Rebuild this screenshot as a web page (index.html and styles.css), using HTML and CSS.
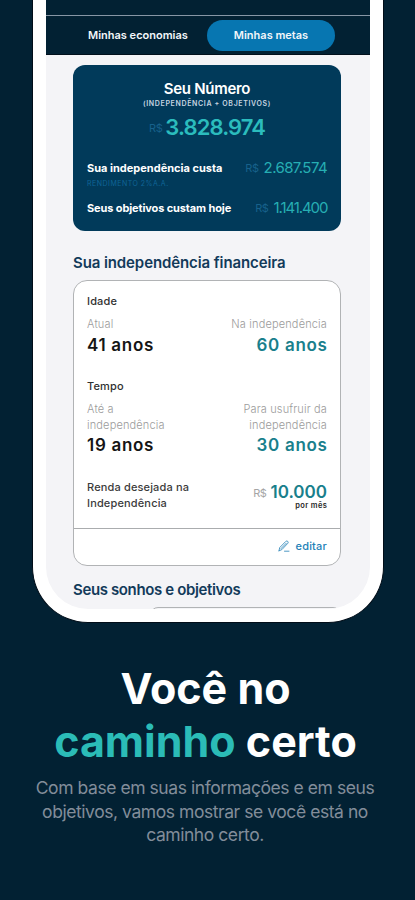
FILE: index.html
```html
<!DOCTYPE html>
<html lang="pt-BR">
<head>
<meta charset="utf-8">
<title>Minhas metas</title>
<link rel="stylesheet" href="styles.css">
</head>
<body>
<main class="phone">
  <div class="screen">
    <nav class="tabs">
      <span class="tab">Minhas economias</span>
      <span class="tab tab-active">Minhas metas</span>
    </nav>
    <section class="total">
      <h2 class="total-title">Seu Número</h2>
      <p class="total-sub">(INDEPENDÊNCIA + OBJETIVOS)</p>
      <p class="total-value"><span class="cur">R$</span><b>3.828.974</b></p>
      <div class="cost">
        <span class="cost-label">Sua independência custa</span>
        <span class="cost-value"><span class="cur">R$</span><b>2.687.574</b></span>
      </div>
      <p class="rate">RENDIMENTO 2%A.A.</p>
      <div class="cost">
        <span class="cost-label goals">Seus objetivos custam hoje</span>
        <span class="cost-value goals-value"><span class="cur">R$</span><b>1.141.400</b></span>
      </div>
    </section>
    <h2 class="heading">Sua independência financeira</h2>
    <section class="plan">
      <div class="plan-body">
        <h3 class="group">Idade</h3>
        <div class="pair idade">
          <div><p class="hint">Atual</p><p class="years">41 anos</p></div>
          <div class="right"><p class="hint">Na independência</p><p class="years teal">60 anos</p></div>
        </div>
        <h3 class="group">Tempo</h3>
        <div class="pair tempo">
          <div><p class="hint">Até a<br>independência</p><p class="years">19 anos</p></div>
          <div class="right"><p class="hint">Para usufruir da<br>independência</p><p class="years teal">30 anos</p></div>
        </div>
        <div class="pair">
          <p class="income-label">Renda desejada na<br>Independência</p>
          <div class="right income">
            <p class="income-value"><span class="cur">R$</span><b>10.000</b></p>
            <p class="per-month">por mês</p>
          </div>
        </div>
      </div>
      <div class="plan-foot">
        <svg class="pencil" viewBox="0 0 12 12" width="12" height="12"><path d="M1 10.8 1.7 7.6 7.8 1.4Q8.7.6 9.7 1.3 10.7 2.3 9.8 3.3L3.9 9.6 1 10.8M3 8.6 8.3 3.2M6.5 11.2H11"/></svg>
        <span class="edit">editar</span>
      </div>
    </section>
    <h2 class="heading dreams">Seus sonhos e objetivos</h2>
    <div class="next-card"></div>
  </div>
</main>
<section class="pitch">
  <h1>Você no<br><em>caminho</em> certo</h1>
  <p>Com base em suas informações e em seus<br>objetivos, vamos mostrar se você está no<br>caminho certo.</p>
</section>
</body>
</html>
```
FILE: styles.css
```css
* { box-sizing: border-box; margin: 0; padding: 0; }
html { background: #022133; }
body { width: 415px; height: 900px; overflow: hidden; background: #022133; font-family: Inter, "Liberation Sans", sans-serif; }
p, h1, h2, h3, span { white-space: nowrap; }
.phone { width: 352px; height: 623px; margin-left: 32px; padding: 0 13px 13px; background: #fff; border: 1px solid #010d18; border-top: 0; border-radius: 0 0 56px 56px; }
.screen { width: 324px; height: 609px; background: #f4f4f7; border-top: 15px solid #022133; border-radius: 0 0 42px 42px; overflow: hidden; }
.tabs { height: 40px; padding: 4px 35px 0 42px; border-top: 1px solid #8796a5; border-bottom: 1px solid #01101c; display: flex; justify-content: space-between; background: #022133; }
.tab { color: #f2f6fa; font-size: 11px; font-weight: 600; line-height: 31px; height: 31px; }
.tab-active { width: 128px; text-align: center; border-radius: 16px; background: #0776b1; }
.total { width: 268px; height: 166px; margin: 10px 0 0 27px; padding: 13px 14px 0; border-radius: 12px; background: #013a5a; color: #fff; text-align: center; }
.total-title { font-size: 15px; line-height: 21px; font-weight: 600; letter-spacing: -.3px; }
.total-sub { font-size: 7px; line-height: 10px; font-weight: 600; letter-spacing: .65px; color: #c6d5e1; }
.total-value { height: 36px; display: flex; justify-content: center; align-items: center; gap: 3px; color: #2bbcbd; font-size: 22px; line-height: 36px; }
.total-value b { font-weight: 600; letter-spacing: -.9px; }
.cur { font-size: 11px; color: #17618b; font-weight: 400; letter-spacing: -.4px; }
.total-value .cur { padding-top: 2px; }
.cost { display: flex; justify-content: space-between; align-items: center; height: 20px; }
.total-value + .cost { margin-top: 13px; }
.cost-label { font-size: 11px; font-weight: 700; }
.goals { letter-spacing: -.12px; }
.cost-value { display: flex; align-items: center; gap: 5px; font-size: 15px; color: #26aeb3; margin-top: -2px; }
.cost-value b { font-weight: 400; letter-spacing: -.6px; }
.goals-value b { letter-spacing: -1.1px; margin-right: -.3px; }
.cost-value .cur { padding-top: 2px; }
.rate { text-align: left; font-size: 7px; line-height: 10px; color: #0f6597; letter-spacing: .5px; margin: 1px 0 9px; }
.heading { margin: 22px 0 0 27px; font-size: 15px; line-height: 20px; font-weight: 600; letter-spacing: -.1px; color: #123a5a; }
.plan { width: 268px; height: 286px; margin: 7px 0 0 27px; border: 1px solid #b1b3b5; border-radius: 14px; background: #fff; }
.plan-body { height: 247px; padding: 12px 13px 0; }
.group { font-size: 11px; line-height: 16px; font-weight: 500; letter-spacing: .15px; color: #303030; }
.pair { display: flex; justify-content: space-between; }
.right { text-align: right; }
.hint { font-size: 11px; line-height: 16px; color: #9b9b9b; font-weight: 300; letter-spacing: .15px; }
.idade { margin-top: 7px; height: 62px; }
.tempo { margin-top: 7px; height: 78px; }
.years { font-size: 17px; line-height: 25px; font-weight: 600; letter-spacing: .7px; color: #151515; }
.idade .years { padding-top: 1px; }
.right .years { margin-right: -.6px; }
.years.teal, .income-value { color: #197f8c; }
.income-label { font-size: 11px; line-height: 16px; font-weight: 500; letter-spacing: .15px; color: #3b3b3b; }
.income-value { display: flex; align-items: center; justify-content: flex-end; gap: 4px; font-size: 17px; line-height: 22px; }
.income-value .cur { color: #a5a5a5; padding-top: 3px; }
.income-value b { font-weight: 600; }
.per-month { font-size: 7.5px; line-height: 3px; font-weight: 600; letter-spacing: .4px; margin-right: -.4px; color: #262626; }
.plan-foot { height: 37px; border-top: 1px solid #aaacae; padding: 0 13px 2px; display: flex; align-items: center; justify-content: flex-end; gap: 5px; }
.pencil { fill: none; stroke: #3a8dbd; stroke-width: .9; stroke-linecap: round; stroke-linejoin: round; }
.edit { font-size: 11px; color: #2381b7; font-weight: 500; letter-spacing: .2px; }
.dreams { margin-top: 14px; letter-spacing: -.37px; }
.next-card { height: 20px; width: 191px; margin: 7px 0 0 104px; border: 1px solid #b1b3b5; border-radius: 8px; }
.pitch { text-align: center; padding: 39px 4px 0 0; }
.pitch h1 { font-size: 43px; line-height: 53px; font-weight: 700; color: #fff; }
.pitch em { color: #2bbcb7; font-style: normal; }
.pitch p { margin: 8px 1px 0 0; font-size: 17.5px; line-height: 23.5px; letter-spacing: -.44px; color: #828d9a; }
```
